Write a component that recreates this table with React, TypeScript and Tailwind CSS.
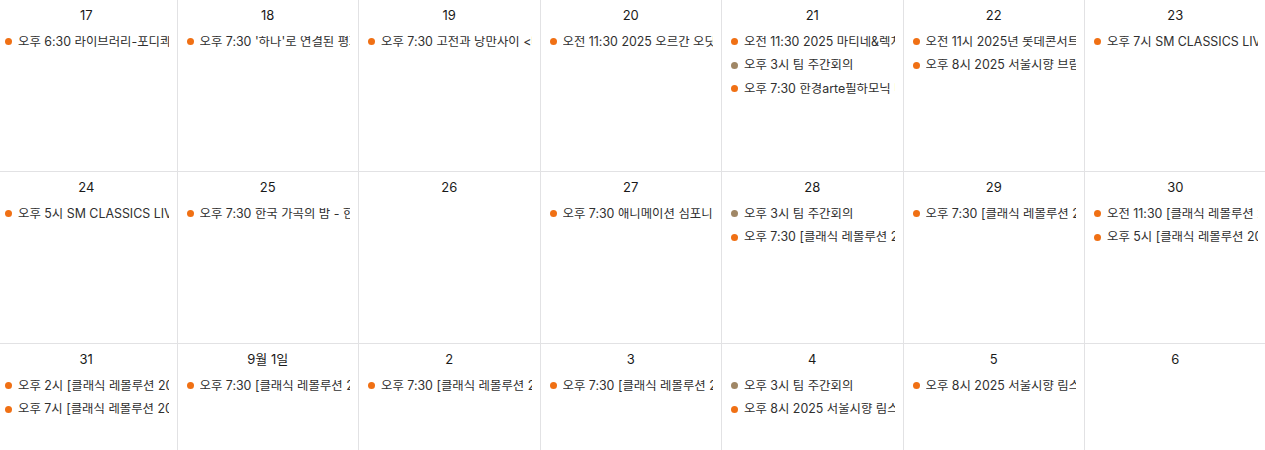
type CalEvent = { label: string; kind?: 'concert' | 'meeting' }

type Day = { date: string; events: CalEvent[] }

const ev = (label: string): CalEvent => ({ label, kind: 'concert' })
const meeting = (label: string): CalEvent => ({ label, kind: 'meeting' })

const WEEKS: Day[][] = [
  [
    { date: '17', events: [ev('오후 6:30 라이브러리-포디콰르텟 정기연주회')] },
    { date: '18', events: [ev("오후 7:30 '하나'로 연결된 평화의 노래")] },
    { date: '19', events: [ev('오후 7:30 고전과 낭만사이 <베토벤과 브람스>')] },
    { date: '20', events: [ev('오전 11:30 2025 오르간 오딧세이')] },
    {
      date: '21',
      events: [
        ev('오전 11:30 2025 마티네&렉처 콘서트'),
        meeting('오후 3시 팀 주간회의'),
        ev('오후 7:30 한경arte필하모닉 마스터즈'),
      ],
    },
    {
      date: '22',
      events: [ev('오전 11시 2025년 롯데콘서트홀 엘 시스테마'), ev('오후 8시 2025 서울시향 브람스 교향곡')],
    },
    { date: '23', events: [ev('오후 7시 SM CLASSICS LIVE 2025')] },
  ],
  [
    { date: '24', events: [ev('오후 5시 SM CLASSICS LIVE 2025')] },
    { date: '25', events: [ev('오후 7:30 한국 가곡의 밤 - 한국의 노래')] },
    { date: '26', events: [] },
    { date: '27', events: [ev('오후 7:30 애니메이션 심포니 : 지브리')] },
    {
      date: '28',
      events: [meeting('오후 3시 팀 주간회의'), ev('오후 7:30 [클래식 레볼루션 2025]')],
    },
    { date: '29', events: [ev('오후 7:30 [클래식 레볼루션 2025]')] },
    {
      date: '30',
      events: [ev('오전 11:30 [클래식 레볼루션 2025]'), ev('오후 5시 [클래식 레볼루션 2025]')],
    },
  ],
  [
    {
      date: '31',
      events: [ev('오후 2시 [클래식 레볼루션 2025]'), ev('오후 7시 [클래식 레볼루션 2025]')],
    },
    { date: '9월 1일', events: [ev('오후 7:30 [클래식 레볼루션 2025]')] },
    { date: '2', events: [ev('오후 7:30 [클래식 레볼루션 2025]')] },
    { date: '3', events: [ev('오후 7:30 [클래식 레볼루션 2025]')] },
    {
      date: '4',
      events: [meeting('오후 3시 팀 주간회의'), ev('오후 8시 2025 서울시향 림스키코르사코프')],
    },
    { date: '5', events: [ev('오후 8시 2025 서울시향 림스키코르사코프')] },
    { date: '6', events: [] },
  ],
]

function EventRow({ event }: { event: CalEvent }) {
  return (
    <div className="flex h-[23.5px] items-center gap-[6px] pl-[9px] pr-[8px]">
      <span
        className={
          event.kind === 'meeting'
            ? 'h-[7px] w-[7px] shrink-0 rounded-full bg-[#a08766]'
            : 'h-[7px] w-[7px] shrink-0 rounded-full bg-[#f07014]'
        }
      />
      <span className="min-w-0 flex-1 overflow-hidden whitespace-nowrap text-[12.4px] leading-none text-[#303030]">
        {event.label}
      </span>
    </div>
  )
}

function DayCell({ day }: { day: Day }) {
  return (
    <div className="h-[172px] overflow-hidden border-r border-b border-[#e2e2e4] pt-[6px]">
      <div className="flex h-[20px] items-center justify-center text-[13px] font-normal text-[#1a1a1a]">
        {day.date}
      </div>
      <div className="mt-[4px] flex flex-col">
        {day.events.map((e, i) => (
          <EventRow key={i} event={e} />
        ))}
      </div>
    </div>
  )
}

export default function App() {
  return (
    <div className="h-[450px] w-[1265px] overflow-hidden bg-white font-['Inter','Noto_Sans_CJK_KR',sans-serif]">
      <div className="ml-[-4px] grid w-[1270.5px] grid-cols-[repeat(7,181.5px)]">
        {WEEKS.flat().map((day, i) => (
          <DayCell key={i} day={day} />
        ))}
      </div>
    </div>
  )
}
